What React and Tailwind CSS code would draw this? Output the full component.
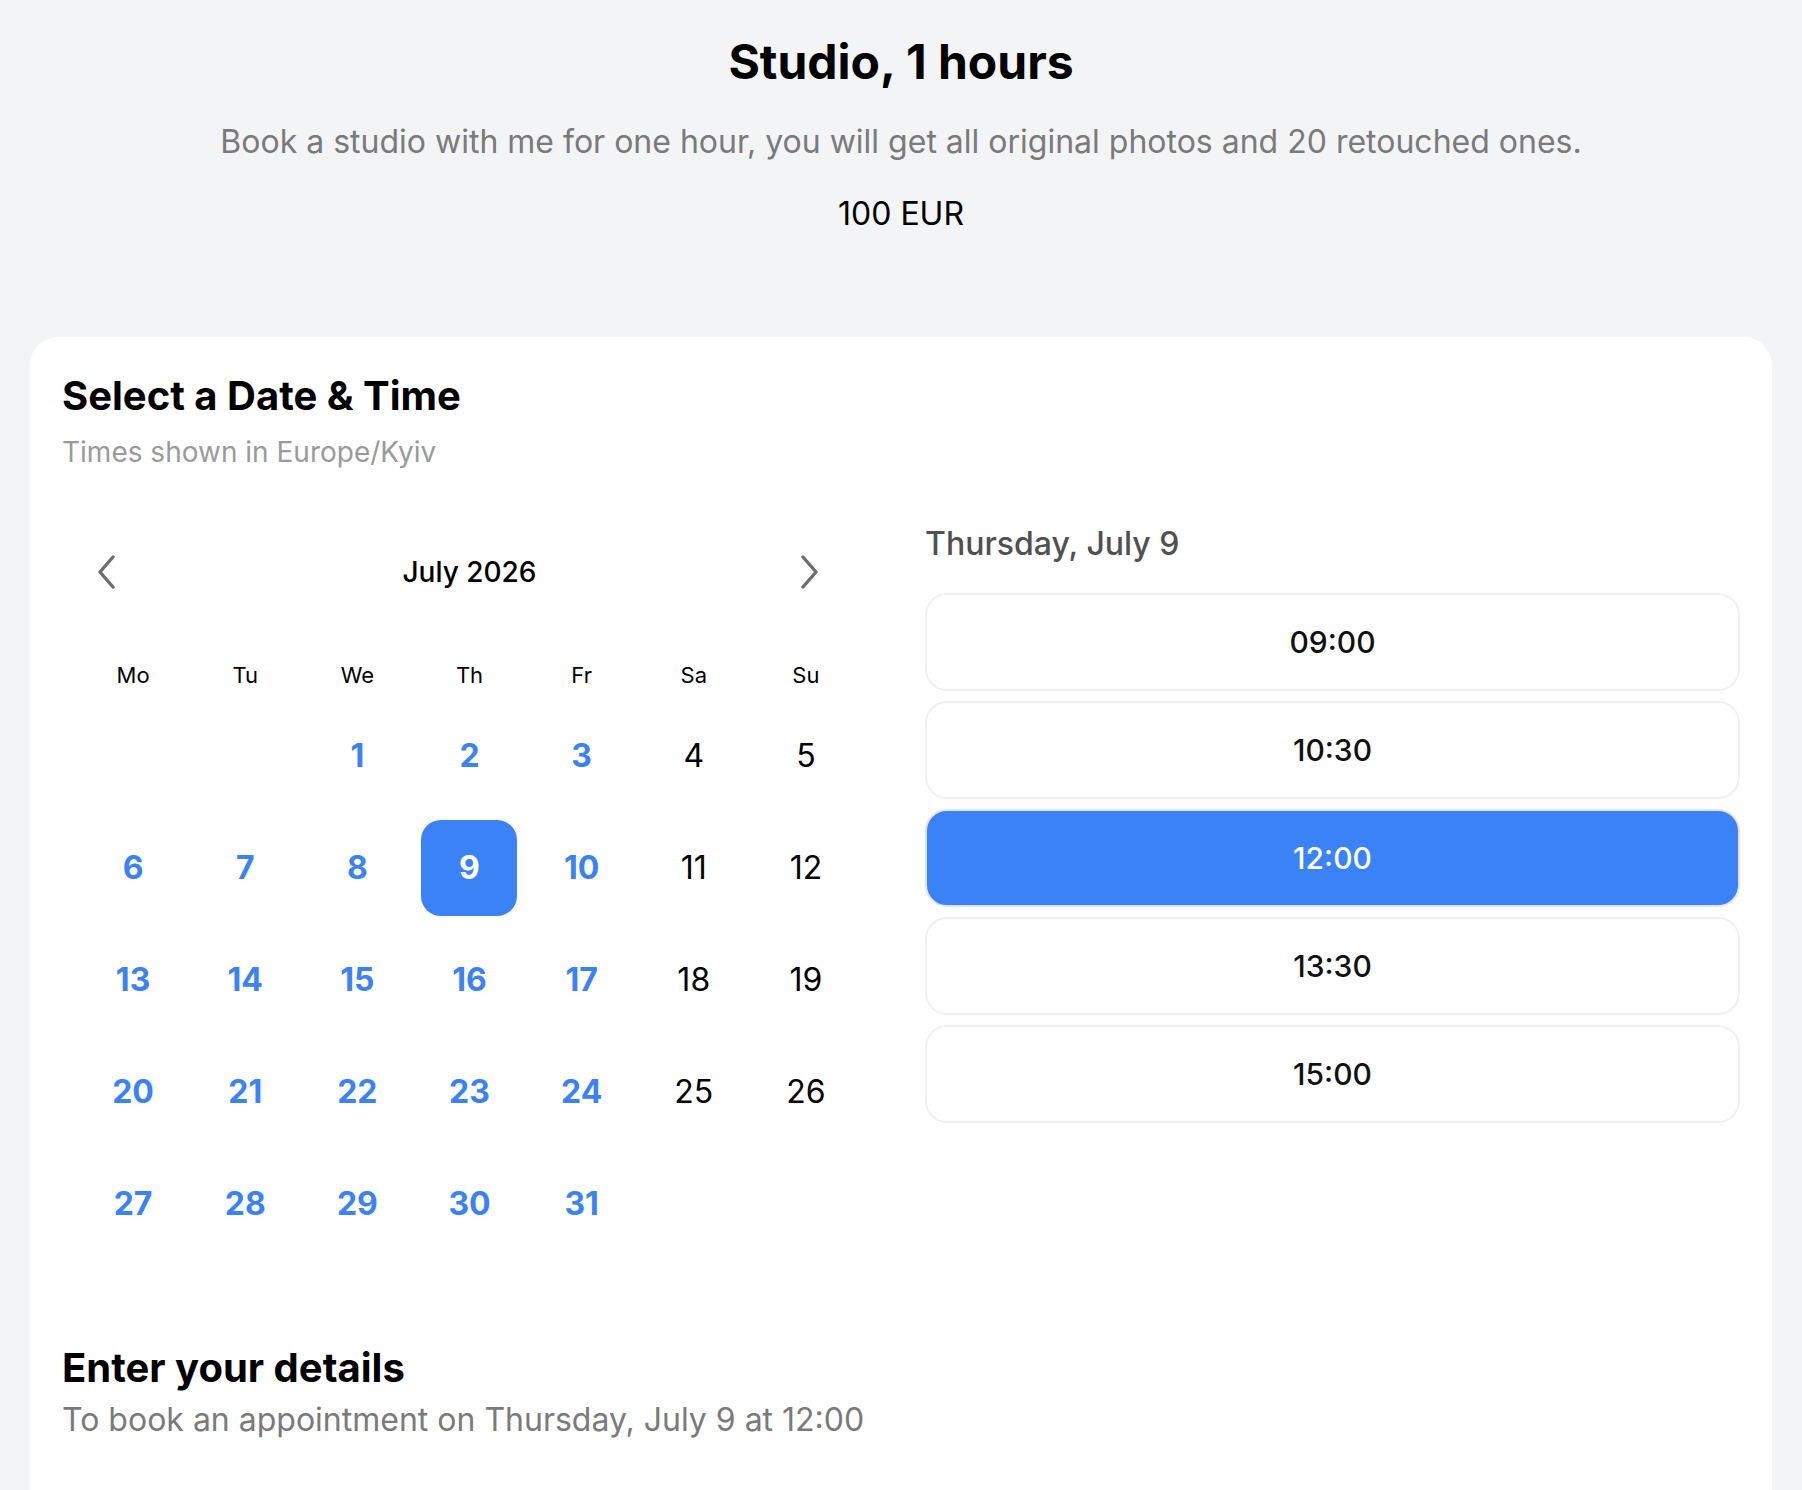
const days = [
  null, null, 1, 2, 3, 4, 5,
  6, 7, 8, 9, 10, 11, 12,
  13, 14, 15, 16, 17, 18, 19,
  20, 21, 22, 23, 24, 25, 26,
  27, 28, 29, 30, 31,
];

const weekdays = ['Mo', 'Tu', 'We', 'Th', 'Fr', 'Sa', 'Su'];
const slots = ['09:00', '10:30', '12:00', '13:30', '15:00'];

function Chevron({ dir }) {
  const points = dir === 'left' ? '16,2 3,17 16,32' : '4,2 17,17 4,32';
  return (
    <svg width="20" height="34" viewBox="0 0 20 34" fill="none">
      <polyline points={points} stroke="#6e6e6e" strokeWidth="3.4" strokeLinecap="round" strokeLinejoin="round" />
    </svg>
  );
}

function Calendar() {
  return (
    <div className="flex flex-col">
      <div className="grid grid-cols-[1fr_auto_1fr] items-center h-[96px]">
        <button className="justify-self-start pl-[35px]">
          <Chevron dir="left" />
        </button>
        <div className="text-[28px] leading-[36px] font-medium text-black">July 2026</div>
        <button className="justify-self-end pr-[58px]">
          <Chevron dir="right" />
        </button>
      </div>

      <div className="grid grid-cols-7 px-[15px] mt-[30px]">
        {weekdays.map((w) => (
          <div key={w} className="h-[50px] flex items-center justify-center text-[22px] leading-[28px] text-black">
            {w}
          </div>
        ))}
        {days.map((d, i) => {
          if (!d) return <div key={i} className="h-[112px]" />;
          const col = i % 7;
          const weekend = col >= 5;
          const selected = d === 9;
          return (
            <div key={i} className="h-[112px] flex items-center justify-center">
              {selected ? (
                <div className="w-[96px] h-[96px] rounded-[20px] bg-[#3b82f6] flex items-center justify-center text-[32px] leading-[40px] font-bold text-white">
                  {d}
                </div>
              ) : weekend ? (
                <span className="text-[32px] leading-[40px] text-black">{d}</span>
              ) : (
                <span className="text-[32px] leading-[40px] font-bold text-[#3b82f6]">{d}</span>
              )}
            </div>
          );
        })}
      </div>
    </div>
  );
}

function TimeSlots() {
  return (
    <div className="flex flex-col">
      <div className="text-[32px] leading-[40px] font-medium text-[#505050]">Thursday, July 9</div>
      <div className="flex flex-col gap-[10px] mt-[29px]">
        {slots.map((s) => (
          <button
            key={s}
            className={
              s === '12:00'
                ? 'h-[98px] rounded-[22px] border-2 border-[#e4e4e4] bg-[#3b82f6] text-white text-[30px] font-medium'
                : 'h-[98px] rounded-[22px] border-2 border-[#f0f0f0] bg-white text-[#111111] text-[30px] font-medium'
            }
          >
            {s}
          </button>
        ))}
      </div>
    </div>
  );
}

export default function App() {
  return (
    <div className="min-h-screen bg-[#f3f4f6] font-['Inter',sans-serif] pt-[32px]">
      <div className="flex flex-col items-center text-center">
        <h1 className="text-[48px] leading-[60px] font-bold text-black">Studio, 1 hours</h1>
        <p className="mt-[30px] text-[32px] leading-[40px] text-[#7a7a7a]">
          Book a studio with me for one hour, you will get all original photos and 20 retouched ones.
        </p>
        <p className="mt-[32px] text-[32px] leading-[40px] text-black">100 EUR</p>
      </div>

      <div className="mx-[30px] mt-[103px] bg-white rounded-t-[28px] px-[32px] pt-[35px] pb-[80px]">
        <h2 className="text-[40px] leading-[48px] font-bold text-black">Select a Date &amp; Time</h2>
        <p className="mt-[14px] text-[28px] leading-[36px] text-[#9a9a9a]">Times shown in Europe/Kyiv</p>

        <div className="grid grid-cols-2 gap-[48px] mt-[54px] items-start">
          <Calendar />
          <TimeSlots />
        </div>

        <h2 className="mt-[84px] text-[40px] leading-[48px] font-bold text-black">Enter your details</h2>
        <p className="mt-[8px] text-[32px] leading-[40px] text-[#7a7a7a]">
          To book an appointment on Thursday, July 9 at 12:00
        </p>
      </div>
    </div>
  );
}
